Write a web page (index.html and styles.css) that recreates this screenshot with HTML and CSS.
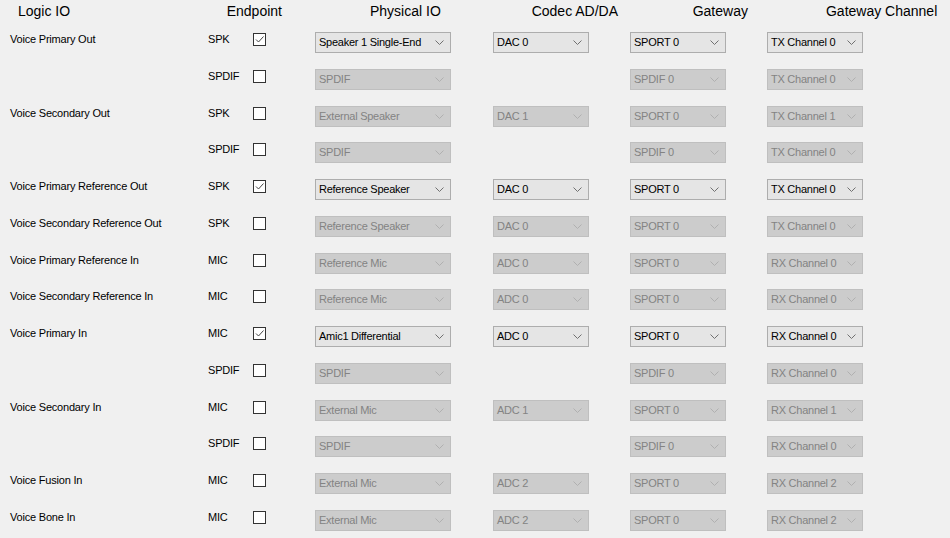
FILE: index.html
```html
<!DOCTYPE html>
<html>
<head>
<meta charset="utf-8">
<link rel="stylesheet" href="styles.css">
</head>
<body>
<div class="page">
  <div class="header">
    <span class="h h1">Logic IO</span>
    <span class="h h2">Endpoint</span>
    <span class="h h3">Physical IO</span>
    <span class="h h4">Codec AD/DA</span>
    <span class="h h5">Gateway</span>
    <span class="h h6">Gateway Channel</span>
  </div>
  <div class="rows" id="rows"></div>
</div>
<script>
var data = [
  ["Voice Primary Out","SPK",1,["Speaker 1 Single-End",1],["DAC 0",1],["SPORT 0",1],["TX Channel 0",1]],
  ["","SPDIF",0,["SPDIF",0],null,["SPDIF 0",0],["TX Channel 0",0]],
  ["Voice Secondary Out","SPK",0,["External Speaker",0],["DAC 1",0],["SPORT 0",0],["TX Channel 1",0]],
  ["","SPDIF",0,["SPDIF",0],null,["SPDIF 0",0],["TX Channel 0",0]],
  ["Voice Primary Reference Out","SPK",1,["Reference Speaker",1],["DAC 0",1],["SPORT 0",1],["TX Channel 0",1]],
  ["Voice Secondary Reference Out","SPK",0,["Reference Speaker",0],["DAC 0",0],["SPORT 0",0],["TX Channel 0",0]],
  ["Voice Primary Reference In","MIC",0,["Reference Mic",0],["ADC 0",0],["SPORT 0",0],["RX Channel 0",0]],
  ["Voice Secondary Reference In","MIC",0,["Reference Mic",0],["ADC 0",0],["SPORT 0",0],["RX Channel 0",0]],
  ["Voice Primary In","MIC",1,["Amic1 Differential",1],["ADC 0",1],["SPORT 0",1],["RX Channel 0",1]],
  ["","SPDIF",0,["SPDIF",0],null,["SPDIF 0",0],["RX Channel 0",0]],
  ["Voice Secondary In","MIC",0,["External Mic",0],["ADC 1",0],["SPORT 0",0],["RX Channel 1",0]],
  ["","SPDIF",0,["SPDIF",0],null,["SPDIF 0",0],["RX Channel 0",0]],
  ["Voice Fusion In","MIC",0,["External Mic",0],["ADC 2",0],["SPORT 0",0],["RX Channel 2",0]],
  ["Voice Bone In","MIC",0,["External Mic",0],["ADC 2",0],["SPORT 0",0],["RX Channel 2",0]]
];
var chev = '<svg class="chev" width="9" height="5" viewBox="0 0 9 5"><polyline points="0.5,0.5 4.5,4.5 8.5,0.5" fill="none" stroke="currentColor" stroke-width="1"/></svg>';
var check = '<svg width="11" height="11" viewBox="0 0 11 11"><polyline points="2,5.5 4.5,8 9.5,2.5" fill="none" stroke="#444" stroke-width="1"/></svg>';
function combo(c, cls) {
  if (!c) return '<div></div>';
  return '<div class="combo ' + cls + (c[1] ? '' : ' disabled') + '"><span class="ctext">' + c[0] + '</span>' + chev + '</div>';
}
var html = '';
data.forEach(function (r) {
  html += '<div class="row">' +
    '<div class="lbl">' + r[0] + '</div>' +
    '<div class="lbl">' + r[1] + '</div>' +
    '<div><span class="cb">' + (r[2] ? check : '') + '</span></div>' +
    combo(r[3], 'wide') + combo(r[4], '') + combo(r[5], '') + combo(r[6], '') +
    '</div>';
});
document.getElementById('rows').innerHTML = html;
</script>
</body>
</html>
```

FILE: styles.css
```css
html, body {
  margin: 0;
  padding: 0;
  background: #f0f0f0;
}
body {
  width: 950px;
  height: 538px;
  overflow: hidden;
  font-family: "Liberation Sans", Arial, sans-serif;
  color: #000;
}
.header {
  height: 30px;
  box-sizing: border-box;
  padding: 3px 0 0 18px;
  display: grid;
  grid-template-columns: 208.7px 143.3px 161.7px 161px 133.3px auto;
}
.h {
  font-size: 14px;
  line-height: 17px;
  white-space: nowrap;
}
.row {
  height: 36.77px;
  padding-left: 10px;
  display: grid;
  grid-template-columns: 198px 45px 62px 178px 137px 137px 96px;
  align-items: start;
}
.lbl {
  font-size: 11px;
  line-height: 13px;
  letter-spacing: -0.2px;
  margin-top: 3px;
  white-space: nowrap;
}
.cb {
  display: block;
  width: 11px;
  height: 11px;
  margin-top: 3px;
  border: 1px solid #333;
  background: #fff;
}
.cb svg {
  display: block;
}
.combo {
  box-sizing: border-box;
  width: 96px;
  height: 21px;
  margin-top: 2px;
  border: 1px solid #adadad;
  background: #e5e5e5;
  display: flex;
  align-items: center;
  padding: 0 6px 0 3px;
  color: #000;
}
.combo.wide {
  width: 136px;
}
.combo .chev {
  color: #707070;
  margin-left: auto;
  flex: none;
}
.combo.disabled {
  background: #cccccc;
  border-color: #bfbfbf;
  color: #838383;
}
.combo.disabled .chev {
  color: #b0b0b0;
}
.ctext {
  font-size: 11px;
  line-height: 13px;
  letter-spacing: -0.25px;
  white-space: nowrap;
}
```
